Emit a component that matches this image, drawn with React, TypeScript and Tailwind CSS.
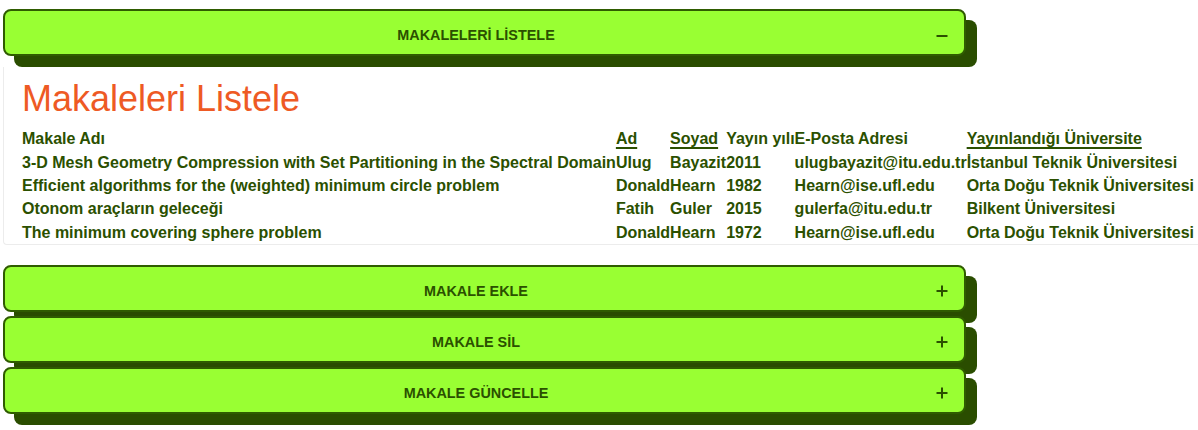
import { useState } from "react";

type Makale = {
  baslik: string;
  ad: string;
  soyad: string;
  yil: string;
  eposta: string;
  universite: string;
};

const MAKALELER: Makale[] = [
  {
    baslik: "3-D Mesh Geometry Compression with Set Partitioning in the Spectral Domain",
    ad: "Ulug",
    soyad: "Bayazit",
    yil: "2011",
    eposta: "ulugbayazit@itu.edu.tr",
    universite: "İstanbul Teknik Üniversitesi",
  },
  {
    baslik: "Efficient algorithms for the (weighted) minimum circle problem",
    ad: "Donald",
    soyad: "Hearn",
    yil: "1982",
    eposta: "Hearn@ise.ufl.edu",
    universite: "Orta Doğu Teknik Üniversitesi",
  },
  {
    baslik: "Otonom araçların geleceği",
    ad: "Fatih",
    soyad: "Guler",
    yil: "2015",
    eposta: "gulerfa@itu.edu.tr",
    universite: "Bilkent Üniversitesi",
  },
  {
    baslik: "The minimum covering sphere problem",
    ad: "Donald",
    soyad: "Hearn",
    yil: "1972",
    eposta: "Hearn@ise.ufl.edu",
    universite: "Orta Doğu Teknik Üniversitesi",
  },
];

export default function App() {
  const [open, setOpen] = useState<string | null>("liste");

  const toggle = (key: string) => setOpen((cur) => (cur === key ? null : key));

  return (
    <div className="min-h-[430px] bg-white pl-[3px] pt-[9px] font-['Liberation_Sans',Arial,sans-serif] text-[#2b5000]">
      <AccordionButton
        label="MAKALELERİ LİSTELE"
        open={open === "liste"}
        onClick={() => toggle("liste")}
      />

      {open === "liste" && (
        <div className="mt-[11px] rounded-bl-[4px] border-b border-l border-[#ececec] pl-[18px]">
          <h1 className="pt-[11px] text-[36px] leading-[1.15] font-normal text-[#ee5a24]">
            Makaleleri Listele
          </h1>

          {/* Makale tablosu */}
          <table className="mt-[8px] border-separate border-spacing-0 whitespace-nowrap text-left text-[16px] leading-[23.3px] font-bold">
            <thead>
              <tr>
                <th className="p-0 font-bold">Makale Adı</th>
                <th className="p-0 font-bold">
                  <span className="underline decoration-2 underline-offset-[3px]">Ad</span>
                </th>
                <th className="p-0 font-bold">
                  <span className="underline decoration-2 underline-offset-[3px]">Soyad</span>
                </th>
                <th className="p-0 font-bold">Yayın yılı</th>
                <th className="p-0 font-bold">E-Posta Adresi</th>
                <th className="p-0 font-bold">
                  <span className="underline decoration-2 underline-offset-[3px]">
                    Yayınlandığı Üniversite
                  </span>
                </th>
              </tr>
            </thead>
            <tbody>
              {MAKALELER.map((m) => (
                <tr key={m.baslik}>
                  <td className="p-0">{m.baslik}</td>
                  <td className="p-0">{m.ad}</td>
                  <td className="p-0">{m.soyad}</td>
                  <td className="p-0">{m.yil}</td>
                  <td className="p-0">{m.eposta}</td>
                  <td className="p-0">{m.universite}</td>
                </tr>
              ))}
            </tbody>
          </table>
        </div>
      )}

      <div className="mt-[20px] flex flex-col gap-[4px]">
        <AccordionButton label="MAKALE EKLE" open={open === "ekle"} onClick={() => toggle("ekle")} />
        <AccordionButton label="MAKALE SİL" open={open === "sil"} onClick={() => toggle("sil")} />
        <AccordionButton
          label="MAKALE GÜNCELLE"
          open={open === "guncelle"}
          onClick={() => toggle("guncelle")}
        />
      </div>
    </div>
  );
}

// ─── Subcomponentes ───────────────────────────────────────────────────────────

function AccordionButton({
  label,
  open,
  onClick,
}: {
  label: string;
  open: boolean;
  onClick: () => void;
}) {
  return (
    <button
      type="button"
      onClick={onClick}
      className="relative flex h-[47px] w-[963px] items-center rounded-[8px] border-2 border-[#2f5c00] bg-[#99ff33] px-[14px] pt-[6px] shadow-[11px_11px_0_#2a4d00]"
    >
      <span className="flex-1 text-center text-[14.4px] font-bold text-[#2b5000]">{label}</span>
      <span className="flex w-[17px] items-center justify-center">
        <svg width="12" height="12" viewBox="0 0 12 12" fill="none" stroke="#2b5000" strokeWidth="2">
          <line x1="0.5" y1="6" x2="11.5" y2="6" />
          {!open && <line x1="6" y1="0.5" x2="6" y2="11.5" />}
        </svg>
      </span>
    </button>
  );
}
